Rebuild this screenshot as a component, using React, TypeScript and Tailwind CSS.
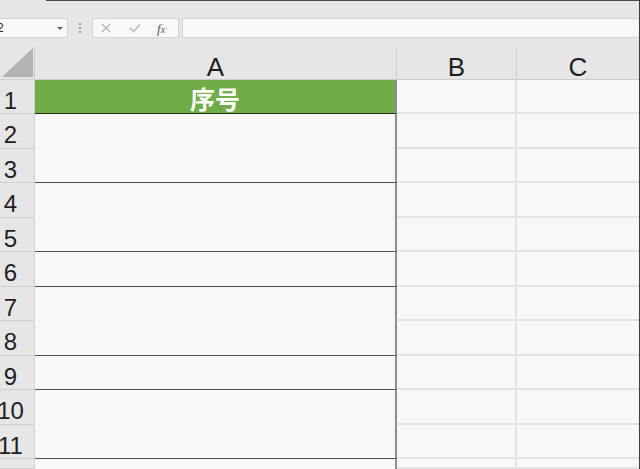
import React from "react";

const ROW_H = [34, 35, 34, 35, 34, 35, 34, 35, 34, 35, 34, 10];

type Seg = { start: number; span: number; green?: boolean; dark: boolean };
const SEGS: Seg[] = [
  { start: 1, span: 1, green: true, dark: true },
  { start: 2, span: 2, dark: true },
  { start: 4, span: 2, dark: true },
  { start: 6, span: 1, dark: true },
  { start: 7, span: 2, dark: true },
  { start: 9, span: 1, dark: true },
  { start: 10, span: 2, dark: true },
  { start: 12, span: 1, dark: false },
];

const font = { fontFamily: '"Liberation Sans", Arial, sans-serif' };

export default function App() {
  const cells: React.ReactNode[] = [];
  ROW_H.forEach((_, i) => {
    const r = i + 1;
    cells.push(
      <div
        key={`h${r}`}
        className="col-start-1 overflow-hidden border-r border-b border-[#cfcfcf] bg-[#e6e6e6]"
        style={{ gridRow: `${r + 1} / span 1` }}
      >
        <div className="-ml-[14px] w-[49px] text-center text-[24px] leading-[42px] text-[#1f1f1f]">
          {r <= 11 ? r : ""}
        </div>
      </div>
    );
    const seg = SEGS.find((s) => s.start === r);
    if (seg) {
      cells.push(
        <div
          key={`a${r}`}
          className={`col-start-2 border-r-2 border-r-[#8e8e8e] ${
            seg.green
              ? "flex items-center justify-center border-b border-b-[#1f3310] bg-[#70ad47]"
              : seg.dark
              ? "border-b border-b-[#4d4d4d] bg-[#f8f8f8]"
              : "bg-[#f8f8f8]"
          }`}
          style={{ gridRow: `${r + 1} / span ${seg.span}` }}
        >
          {seg.green && (
            <span
              className="pt-[4px] text-[25px] font-bold leading-none text-white"
              style={{ fontFamily: '"Noto Sans CJK SC", "Noto Sans", sans-serif' }}
            >
              序号
            </span>
          )}
        </div>
      );
    }
    cells.push(
      <div
        key={`b${r}`}
        className="col-start-3 border-r-2 border-b-2 border-[#e4e4e4] bg-[#f8f8f8]"
        style={{ gridRow: `${r + 1} / span 1` }}
      />
    );
    cells.push(
      <div
        key={`c${r}`}
        className="col-start-4 border-b-2 border-[#e4e4e4] bg-[#f8f8f8]"
        style={{ gridRow: `${r + 1} / span 1` }}
      />
    );
  });

  return (
    <div
      className="relative h-[469px] w-[640px] overflow-hidden border-r border-r-[#3c3c3c] bg-[#e6e6e6]"
      style={font}
    >
      {/* top edge */}
      <div className="ml-[46px] h-px bg-[#4a4a4a]" />
      {/* formula toolbar */}
      <div className="flex h-[45px] items-start pt-[17px]">
        <div className="-ml-[60px] flex h-[20px] w-[128px] shrink-0 items-center border border-[#d3d3d3] bg-[#f8f8f8]">
          <span className="pl-[48px] text-[12px] text-[#2b2b2b]">A2</span>
          <span className="ml-auto mr-[4px] h-0 w-0 border-x-[3px] border-t-[3px] border-x-transparent border-t-[#666]" />
        </div>
        <div className="flex h-[20px] w-[24px] shrink-0 flex-col items-center justify-center gap-[2px]">
          <span className="h-[2px] w-[2px] bg-[#9a9a9a]" />
          <span className="h-[2px] w-[2px] bg-[#9a9a9a]" />
          <span className="h-[2px] w-[2px] bg-[#9a9a9a]" />
        </div>
        <div className="flex h-[20px] w-[87px] shrink-0 items-center border border-[#d3d3d3] bg-[#f8f8f8]">
          <svg width="10" height="10" viewBox="0 0 10 10" className="ml-[8px]">
            <path d="M1 1 L9 9 M9 1 L1 9" stroke="#b4b4b4" strokeWidth="1.2" fill="none" />
          </svg>
          <svg width="12" height="10" viewBox="0 0 12 10" className="ml-[18px]">
            <path d="M1 5 L4.5 8.5 L11 1.5" stroke="#b4b4b4" strokeWidth="1.3" fill="none" />
          </svg>
          <span
            className="ml-[16px] text-[13px] italic leading-none text-[#555]"
            style={{ fontFamily: '"Liberation Serif", serif' }}
          >
            f<span className="text-[10px]">x</span>
          </span>
        </div>
        <div className="ml-[3px] h-[20px] flex-1 border border-r-0 border-[#d3d3d3] bg-[#f8f8f8]" />
      </div>
      {/* sheet grid */}
      <div className="grid grid-cols-[35px_362px_120px_122px] grid-rows-[34px_34px_35px_34px_35px_34px_35px_34px_35px_34px_35px_34px_10px]">
        <div className="col-start-1 row-start-1 flex items-end justify-end border-r border-b border-[#cfcfcf] bg-[#e6e6e6] pr-[1px] pb-[2px]">
          <svg width="31" height="29" viewBox="0 0 31 29">
            <polygon points="31,0 31,29 0,29" fill="#b3b3b3" />
          </svg>
        </div>
        <div className="col-start-2 row-start-1 border-r border-b border-[#cdcdcd] text-center text-[26px] leading-[42px] text-[#1f1f1f]">
          A
        </div>
        <div className="col-start-3 row-start-1 border-r border-b border-[#cdcdcd] text-center text-[26px] leading-[42px] text-[#1f1f1f]">
          B
        </div>
        <div className="col-start-4 row-start-1 border-b border-[#cdcdcd] text-center text-[26px] leading-[42px] text-[#1f1f1f]">
          C
        </div>
        {cells}
      </div>
    </div>
  );
}
